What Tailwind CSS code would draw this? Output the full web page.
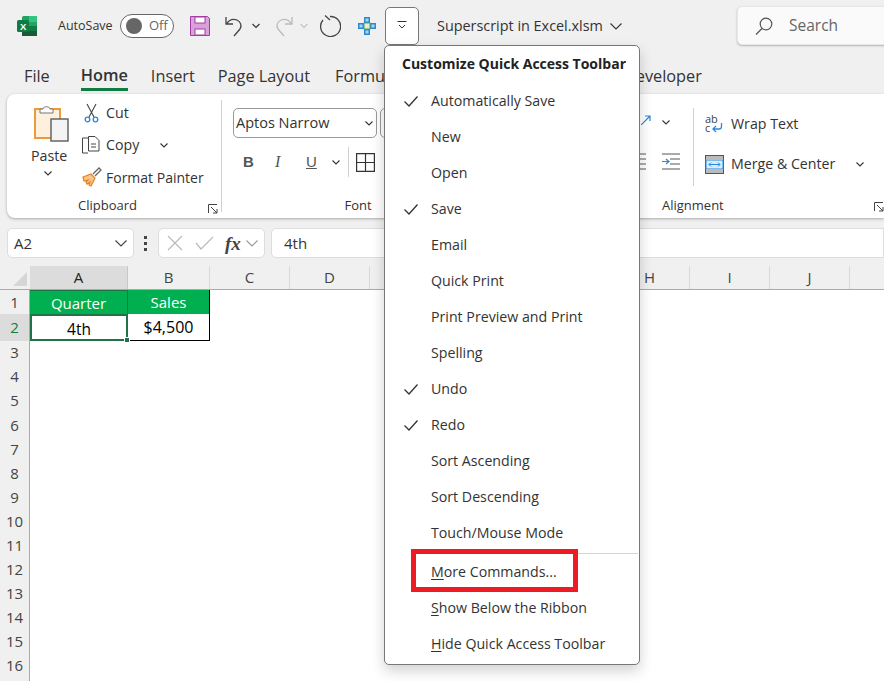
<!DOCTYPE html>
<html lang="en">
<head>
<meta charset="UTF-8">
<title>Superscript in Excel.xlsm</title>
<script src="https://cdn.jsdelivr.net/npm/@tailwindcss/browser@4"></script>
</head>
<body class="bg-[#f0f0f0] font-['Open_Sans',sans-serif] text-[14.2px] text-[#333] overflow-hidden">
<div class="relative w-[884px] h-[681px] overflow-hidden">

  <!-- title bar -->
  <div class="flex items-center h-[52px] pl-[17px] whitespace-nowrap">
    <svg class="w-[20px] h-[20px] shrink-0" viewBox="0 0 20 20"><rect x="5" y="0" width="15" height="20" rx="1.5" fill="#21a366"/><rect x="12" y="0" width="8" height="6" fill="#33c481"/><rect x="12" y="10" width="8" height="5" fill="#107c41"/><rect x="5" y="15" width="15" height="5" fill="#185c37"/><rect x="0" y="4" width="12" height="12" rx="1.5" fill="#107c41"/><text x="3" y="13.5" font-size="9.5" font-weight="700" fill="#fff" font-family="Liberation Sans">X</text></svg>
    <span class="ml-[21px] w-[54px] text-[12.5px]">AutoSave</span>
    <div class="ml-[8px] w-[54px] h-[24px] shrink-0 rounded-full border border-[#666] bg-white flex items-center pl-[5px] gap-[7px]">
      <span class="w-[16px] h-[16px] rounded-full bg-[#666]"></span><span class="text-[13px] text-[#666]">Off</span>
    </div>
    <svg class="ml-[16px] w-[20px] h-[20px] shrink-0" viewBox="0 0 20 20"><path d="M.5.5h17l2 2v17H.5z" fill="#d9a0d9" stroke="#a13ea1"/><rect x="5" y="1" width="10" height="6" fill="#fff" stroke="#a13ea1"/><rect x="5" y="13" width="10" height="6" fill="#fff" stroke="#a13ea1"/></svg>
    <svg class="ml-[15px] w-[20px] h-[22px] shrink-0" viewBox="0 0 20 22" fill="none" stroke="#444" stroke-width="1.3"><path d="M1 2v7h7M1.500 9C4 5 8 3.500 12 5c4 2 5 6 3 9l-6 7"/></svg>
    <svg class="ml-[7px] w-[8px] h-[6px] shrink-0" viewBox="0 0 8 6" fill="none" stroke="#333" stroke-width="1.200"><path d="M.5 1 4 4.500 7.500 1"/></svg>
    <svg class="ml-[13px] w-[20px] h-[22px] shrink-0" viewBox="0 0 20 22" fill="none" stroke="#bbb" stroke-width="1.3"><path d="M19 2v7h-7M18.500 9C16 5 12 3.500 8 5c-4 2-5 6-3 9l6 7"/></svg>
    <svg class="ml-[7px] w-[8px] h-[6px] shrink-0" viewBox="0 0 8 6" fill="none" stroke="#c4c4c4" stroke-width="1.200"><path d="M.5 1 4 4.500 7.500 1"/></svg>
    <svg class="ml-[11px] w-[22px] h-[22px] shrink-0" viewBox="0 0 22 22" fill="none" stroke="#444" stroke-width="1.300"><path d="M4 5 A10 10 0 1 0 11 1.500"/><path d="M6 .5 11 5"/></svg>
    <svg class="ml-[17px] w-[18px] h-[18px] shrink-0" viewBox="0 0 18 18"><path d="M6 0h6v6h6v6h-6v6H6v-6H0V6h6z" fill="#2b88d8"/><rect x="6" y="6" width="6" height="6" fill="#dff0d8" stroke="#5aa05a"/><rect x="7.500" y="1.500" width="3" height="3" fill="#a8d4f5"/><rect x="7.500" y="13.500" width="3" height="3" fill="#a8d4f5"/><rect x="1.500" y="7.500" width="3" height="3" fill="#a8d4f5"/><rect x="13.500" y="7.500" width="3" height="3" fill="#a8d4f5"/></svg>
    <div class="ml-[9px] w-[34px] h-[38px] shrink-0 rounded-[5px] border border-[#777] bg-white flex items-center justify-center -mt-[1px]">
      <svg class="w-[10px] h-[9px]" viewBox="0 0 10 9" fill="none" stroke="#333"><path d="M.500 .500h9M2 4l3 3 3-3"/></svg>
    </div>
    <span class="ml-[18px] w-[166px] shrink-0 text-[14.400px]">Superscript in Excel.xlsm</span>
    <svg class="ml-[7px] w-[12px] h-[7px] shrink-0" viewBox="0 0 12 7" fill="none" stroke="#333" stroke-width="1.100"><path d="M.5.500 6 6l5.500-5.500"/></svg>
    <div class="ml-[115px] w-[170px] h-[39px] shrink-0 bg-[#fafafa] rounded-[5px] border border-[#e6e6e6] shadow-[0_1px_2px_rgba(0,0,0,0.25)] flex items-center pl-[17px] -mt-[1px]">
      <svg class="w-[18px] h-[18px] shrink-0" viewBox="0 0 18 18" fill="none" stroke="#555" stroke-width="1.200"><circle cx="11" cy="7" r="5.800"/><path d="M7 11.500 1 17.500"/></svg>
      <span class="ml-[16px] text-[15.500px] text-[#666]">Search</span>
    </div>
  </div>

  <!-- tabs -->
  <div class="flex items-start h-[42px] pl-[24px] pt-[12px] text-[16.300px] text-[#333] whitespace-nowrap">
    <span>File</span>
    <span class="ml-[31px] font-semibold border-b-[3px] border-[#107c41] h-[27px] leading-[23px]">Home</span>
    <span class="ml-[23px]">Insert</span>
    <span class="ml-[23px]">Page Layout</span>
    <span class="ml-[25px]">Formulas</span>
    <span class="ml-[218px]">Developer</span>
  </div>

  <!-- ribbon -->
  <div class="ml-[7px] h-[124px] bg-white rounded-l-[8px] shadow-[0_1px_3px_rgba(0,0,0,0.3)] flex">
    <!-- clipboard -->
    <div class="w-[215px] shrink-0 relative">
      <div class="flex h-[100px]">
        <div class="w-[66px] pl-[27px] pt-[10px] flex flex-col items-start">
          <svg class="w-[36px] h-[38px] shrink-0" viewBox="0 0 36 38"><rect x="1" y="5" width="25" height="29" fill="#fdf0dc" stroke="#ed9b3a" stroke-width="2"/><path d="M6 9V5h3c0-3 7-3 7 0h3v4z" fill="#fff" stroke="#777"/><rect x="17" y="15" width="17" height="22" fill="#f4f4f4" stroke="#666" stroke-width="1.500"/></svg>
          <span class="-ml-[3px] mt-[5px] leading-[18px]">Paste</span>
          <svg class="ml-[10px] mt-[6px] w-[8px] h-[5px]" viewBox="0 0 8 5" fill="none" stroke="#333" stroke-width="1.100"><path d="M.5.500 4 4 7.500.500"/></svg>
        </div>
        <div class="flex flex-col pl-[8px] pt-[9px] gap-[12px] whitespace-nowrap">
          <div class="flex items-center h-[20px]">
            <svg class="w-[20px] h-[20px] ml-[1px] shrink-0" viewBox="0 0 20 20" fill="none"><path d="M5 1l7 13M14 1 7 14" stroke="#444" stroke-width="1.100"/><circle cx="5.500" cy="16.500" r="2.300" stroke="#2b88d8" stroke-width="1.300"/><circle cx="13.500" cy="16.500" r="2.300" stroke="#2b88d8" stroke-width="1.300"/></svg>
            <span class="ml-[4px]">Cut</span>
          </div>
          <div class="flex items-center h-[20px]">
            <svg class="w-[20px] h-[20px] shrink-0" viewBox="0 0 20 20" fill="none" stroke="#444"><path d="M7 3H1.500v15H7"/><path d="M7.500 1.500H14l4 4V16H7.500z" fill="#fff"/><path d="M10 9h5M10 12h5"/></svg>
            <span class="ml-[5px]">Copy</span>
            <svg class="ml-[21px] w-[8px] h-[5px]" viewBox="0 0 8 5" fill="none" stroke="#333" stroke-width="1.100"><path d="M.5.500 4 4 7.500.500"/></svg>
          </div>
          <div class="flex items-center h-[20px]">
            <svg class="w-[21px] h-[20px] shrink-0" viewBox="0 0 21 20" fill="none"><path d="M2 10l8-3 4 4-4 8-2-1 1-3-3 2-1-2 2-2-4 1z" fill="#f8c68a" stroke="#e8801e" stroke-width="1.200"/><path d="M12 7l6-6 2 2-6 6" stroke="#666" stroke-width="1.300"/></svg>
            <span class="ml-[4px] text-[14px]">Format Painter</span>
          </div>
        </div>
      </div>
      <div class="text-[13px] pl-[71px] leading-[18px] mt-[2px]">Clipboard</div>
      <svg class="absolute right-[4px] bottom-[4px] w-[10px] h-[10px]" viewBox="0 0 10 10" fill="none" stroke="#444"><path d="M.500 9V.500H9M3 3l6 6M9 5v4H5"/></svg>
      <span class="absolute right-0 top-[6px] bottom-[6px] w-px bg-[#d0d0d0]"></span>
    </div>
    <!-- font -->
    <div class="w-[272px] shrink-0 pl-[11px] pt-[14px] relative">
      <div class="flex">
        <div class="w-[144px] h-[30px] rounded-[5px] border border-[#999] flex items-center pl-[2px] justify-between pr-[3px] text-[14.500px]">Aptos Narrow
          <svg class="w-[8px] h-[5px]" viewBox="0 0 8 5" fill="none" stroke="#333" stroke-width="1.100"><path d="M.5.500 4 4 7.500.500"/></svg>
        </div>
        <div class="ml-[3px] w-[40px] h-[30px] rounded-[5px] border border-[#999]"></div>
      </div>
      <div class="flex items-center mt-[10px] h-[28px]">
        <span class="ml-[10px] w-[18px] font-['Liberation_Sans'] font-bold text-[15px] text-[#555]">B</span>
        <span class="ml-[14px] w-[18px] font-['Liberation_Serif'] italic text-[16px] text-[#555]">I</span>
        <span class="ml-[13px] font-['Liberation_Sans'] underline text-[15px] text-[#555]">U</span>
        <svg class="ml-[15px] w-[8px] h-[5px]" viewBox="0 0 8 5" fill="none" stroke="#333" stroke-width="1.100"><path d="M.5.500 4 4 7.500.500"/></svg>
        <span class="ml-[8px] w-px h-[30px] bg-[#d0d0d0]"></span>
        <svg class="ml-[7px] w-[19px] h-[19px]" viewBox="0 0 19 19" fill="none" stroke="#333" stroke-width="1.200"><path d="M.6.600h17.800v17.800H.6zM9.500.6v17.800M.6 9.500h17.800"/></svg>
      </div>
      <div class="absolute left-0 right-0 top-[102px] text-center text-[13px] leading-[18px]">Font</div>
    </div>
    <!-- alignment -->
    <div class="flex-1 relative">
      <div class="absolute left-[199px] top-[14px] h-[78px] w-px bg-[#d0d0d0]"></div>
      <svg class="absolute left-[147px] top-[21px] w-[10px] h-[10px]" viewBox="0 0 10 10" fill="none" stroke="#2b88d8" stroke-width="1.200"><path d="M0 10 9 1M4 1h5v5"/></svg>
      <svg class="absolute left-[168px] top-[26px] w-[8px] h-[5px]" viewBox="0 0 8 5" fill="none" stroke="#333" stroke-width="1.100"><path d="M.5.500 4 4 7.500.500"/></svg>
      <svg class="absolute left-[168px] top-[59px] w-[18px] h-[18px]" viewBox="0 0 18 18" fill="none" stroke="#555"><path d="M0 1h18M8 6h10M8 11h10M0 16h18"/><path d="M0 8.500h6M4 6l3 2.500L4 11" stroke="#2b88d8" stroke-width="1.200"/></svg>
      <svg class="absolute left-[146px] top-[59px] w-[6px] h-[18px]" viewBox="0 0 6 18" fill="none" stroke="#555"><path d="M0 1h6M0 6h6M0 11h6M0 16h6"/></svg>
      <div class="absolute left-[211px] top-[19px] flex items-center h-[22px] whitespace-nowrap">
        <div class="relative w-[19px] h-[20px] text-[11px] leading-[9px] text-[#444]">ab<br>c
          <svg class="absolute left-[7px] top-[9px] w-[11px] h-[10px]" viewBox="0 0 11 10" fill="none" stroke="#2b88d8" stroke-width="1.300"><path d="M9.500 0v3.500q0 2.500-2.500 2.500H1M4 3 1 6l3 3"/></svg>
        </div>
        <span class="ml-[7px]">Wrap Text</span>
      </div>
      <div class="absolute left-[211px] top-[59px] flex items-center h-[22px] whitespace-nowrap">
        <svg class="w-[19px] h-[19px] shrink-0" viewBox="0 0 19 19"><rect x=".5" y=".5" width="18" height="18" fill="#fff" stroke="#555"/><rect x="1" y="5" width="17" height="9" fill="#d6ecfb" stroke="#2b88d8"/><path d="M1 1h17v3H1zM1 15h17v3H1z" fill="#bbb"/><path d="M4 9.500h11M6 7.500l-2 2 2 2M13 7.500l2 2-2 2" fill="none" stroke="#2b88d8"/></svg>
        <span class="ml-[7px]">Merge &amp; Center</span>
        <svg class="ml-[21px] w-[8px] h-[5px]" viewBox="0 0 8 5" fill="none" stroke="#333" stroke-width="1.100"><path d="M.5.500 4 4 7.500.500"/></svg>
      </div>
      <div class="absolute left-[168px] top-[102px] text-[13px] leading-[18px]">Alignment</div>
      <svg class="absolute right-[0px] bottom-[6px] w-[10px] h-[10px]" viewBox="0 0 10 10" fill="none" stroke="#444"><path d="M.500 9V.500H9M3 3l6 6M9 5v4H5"/></svg>
    </div>
  </div>

  <!-- formula bar -->
  <div class="flex items-center h-[30px] mt-[10px] ml-[7px] text-[15px]">
    <div class="w-[127px] h-[30px] bg-white rounded-[5px] border border-[#ddd] flex items-center justify-between pl-[6px] pr-[6px]">A2
      <svg class="w-[12px] h-[7px]" viewBox="0 0 12 7" fill="none" stroke="#444" stroke-width="1.200"><path d="M.5.500 6 6l5.500-5.500"/></svg>
    </div>
    <div class="ml-[10px] w-[4px] flex flex-col gap-[3px]"><span class="w-[3px] h-[3px] bg-[#444]"></span><span class="w-[3px] h-[3px] bg-[#444]"></span><span class="w-[3px] h-[3px] bg-[#444]"></span></div>
    <div class="ml-[10px] w-[107px] h-[30px] bg-white rounded-[5px] border border-[#ddd] flex items-center pl-[8px]">
      <svg class="w-[16px] h-[16px]" viewBox="0 0 16 16" fill="none" stroke="#bbb" stroke-width="1.200"><path d="M1 1l14 14M15 1 1 15"/></svg>
      <svg class="ml-[12px] w-[19px] h-[14px]" viewBox="0 0 19 14" fill="none" stroke="#bbb" stroke-width="1.200"><path d="M1 7l5 6L18 1"/></svg>
      <span class="ml-[11px] font-['Liberation_Serif'] italic font-bold text-[19px] text-[#444] leading-none">fx</span>
      <svg class="ml-[5px] w-[12px] h-[7px]" viewBox="0 0 12 7" fill="none" stroke="#999" stroke-width="1.100"><path d="M.5.500 6 6l5.500-5.500"/></svg>
    </div>
    <div class="ml-[6px] flex-1 h-[30px] bg-white rounded-l-[5px] border border-[#ddd] flex items-center pl-[12px]">4th</div>
  </div>

  <!-- column headers -->
  <div class="flex h-[24px] mt-[8px] border-b border-[#aaa] text-[15px] leading-[23px] text-[#444]">
    <div class="w-[30px] relative"><span class="absolute right-[3px] bottom-[3px] border-l-[14px] border-b-[14px] border-l-transparent border-b-[#d6d6d6]"></span></div>
    <div class="w-[98px] bg-[#dcdcdc] border-r border-[#c8c8c8] text-center text-[#222]">A</div>
    <div class="w-[82px] border-r border-[#d8d8d8] text-center">B</div>
    <div class="w-[80px] border-r border-[#d8d8d8] text-center">C</div>
    <div class="w-[80px] border-r border-[#d8d8d8] text-center">D</div>
    <div class="w-[240px] border-r border-[#d8d8d8]"></div>
    <div class="w-[80px] border-r border-[#d8d8d8] text-center">H</div>
    <div class="w-[80px] border-r border-[#d8d8d8] text-center">I</div>
    <div class="w-[80px] border-r border-[#d8d8d8] text-center">J</div>
  </div>

  <!-- sheet -->
  <div class="flex h-[392px]">
    <div class="w-[30px] shrink-0 border-r border-[#aaa] text-center text-[15px] text-[#444] leading-[24px]">
      <div class="h-[24px]">1</div>
      <div class="h-[27px] bg-[#dcdcdc] text-[#107c41] leading-[27px]">2</div>
      <div class="h-[23px] leading-[23px]">3</div><div class="h-[24px]">4</div><div class="h-[25px]">5</div><div class="h-[24px]">6</div><div class="h-[24px]">7</div><div class="h-[24px]">8</div><div class="h-[24px]">9</div><div class="h-[24px]">10</div><div class="h-[24px]">11</div><div class="h-[24px]">12</div><div class="h-[24px]">13</div><div class="h-[24px]">14</div><div class="h-[24px]">15</div><div class="h-[24px]">16</div>
    </div>
    <div class="flex-1 bg-white">
      <div class="grid grid-cols-[98px_82px] text-[15px] leading-[25px] text-center">
        <div class="h-[24px] bg-[#00b050] text-white border-t border-r border-[#217346]">Quarter</div>
        <div class="h-[24px] bg-[#00b050] text-white border-r border-black">Sales</div>
        <div class="relative h-[27px] border-2 border-[#217346] text-black text-[15.500px] leading-[26px]">4th<span class="absolute -right-[4px] -bottom-[4px] w-[6px] h-[6px] bg-[#217346] border border-white"></span></div>
        <div class="h-[27px] border-r border-b border-black text-black text-[16px] leading-[27px]">$4,500</div>
      </div>
    </div>
  </div>

  <!-- dropdown menu -->
  <div class="absolute left-[384px] top-[45px] w-[256px] h-[620px] bg-white rounded-[5px] border border-[#777] shadow-[0_6px_14px_rgba(0,0,0,0.18)] text-[#333] whitespace-nowrap">
    <div class="pl-[17px] pt-[7px] h-[37px] font-bold text-[14px] text-[#222] leading-[22px]">Customize Quick Access Toolbar</div>
    <div class="flex flex-col">
      <div class="flex items-center h-[36px]"><svg class="ml-[19px] w-[14px] h-[11px]" viewBox="0 0 14 11" fill="none" stroke="#333" stroke-width="1.300"><path d="M.5 5.500 5 10 13.500.5"/></svg><span class="ml-[13px]">Automatically Save</span></div>
      <div class="flex items-center h-[36px] pl-[46px]">New</div>
      <div class="flex items-center h-[36px] pl-[46px]">Open</div>
      <div class="flex items-center h-[36px]"><svg class="ml-[19px] w-[14px] h-[11px]" viewBox="0 0 14 11" fill="none" stroke="#333" stroke-width="1.300"><path d="M.5 5.500 5 10 13.500.5"/></svg><span class="ml-[13px]">Save</span></div>
      <div class="flex items-center h-[36px] pl-[46px]">Email</div>
      <div class="flex items-center h-[36px] pl-[46px]">Quick Print</div>
      <div class="flex items-center h-[36px] pl-[46px]">Print Preview and Print</div>
      <div class="flex items-center h-[36px] pl-[46px]">Spelling</div>
      <div class="flex items-center h-[36px]"><svg class="ml-[19px] w-[14px] h-[11px]" viewBox="0 0 14 11" fill="none" stroke="#333" stroke-width="1.300"><path d="M.5 5.500 5 10 13.500.5"/></svg><span class="ml-[13px]">Undo</span></div>
      <div class="flex items-center h-[36px]"><svg class="ml-[19px] w-[14px] h-[11px]" viewBox="0 0 14 11" fill="none" stroke="#333" stroke-width="1.300"><path d="M.5 5.500 5 10 13.500.5"/></svg><span class="ml-[13px]">Redo</span></div>
      <div class="flex items-center h-[36px] pl-[46px]">Sort Ascending</div>
      <div class="flex items-center h-[36px] pl-[46px]">Sort Descending</div>
      <div class="flex items-center h-[36px] pl-[46px]">Touch/Mouse Mode</div>
      <div class="ml-[30px] mr-[1px] mt-[2px] h-px bg-[#d4d4d4]"></div>
      <div class="flex items-center h-[36px] pl-[46px]"><span class="underline underline-offset-2">M</span>ore Commands...</div>
      <div class="flex items-center h-[36px] pl-[46px]"><span class="underline underline-offset-2">S</span>how Below the Ribbon</div>
      <div class="flex items-center h-[36px] pl-[46px]"><span class="underline underline-offset-2">H</span>ide Quick Access Toolbar</div>
    </div>
  </div>

  <!-- red highlight -->
  <div class="absolute left-[411px] top-[549px] w-[167px] h-[43px] border-[5px] border-[#ed1c24]"></div>
</div>
</body>
</html>
